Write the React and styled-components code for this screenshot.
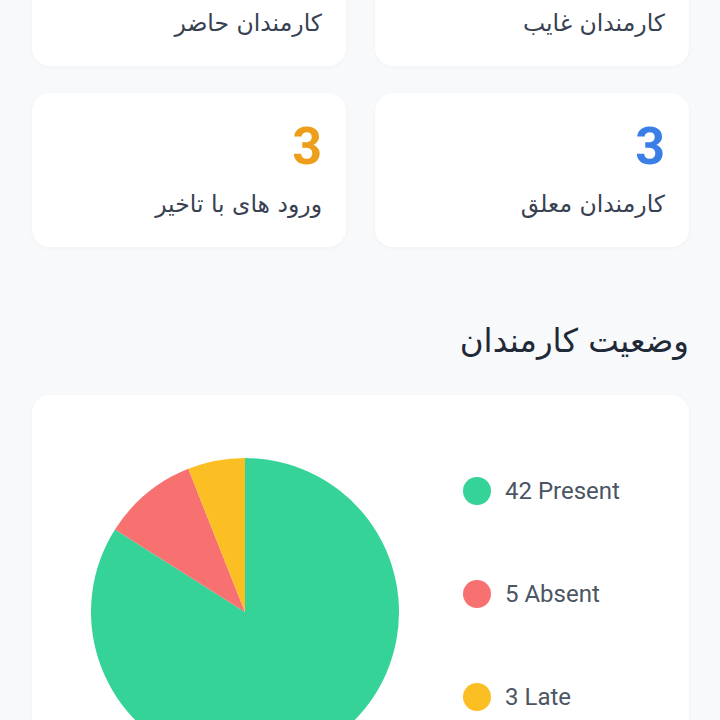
import React from "react";
import styled, { createGlobalStyle } from "styled-components";

const GlobalStyle = createGlobalStyle`
  html, body {
    margin: 0;
    padding: 0;
    background: #f8f9fb;
  }
  * {
    box-sizing: border-box;
  }
`;

const Page = styled.div`
  min-height: 100vh;
  background: #f8f9fb;
  padding: 0 31px 40px 32px;
  direction: rtl;
  overflow: hidden;
  font-family: "Roboto", "DejaVu Sans", sans-serif;
`;

const StatsGrid = styled.div`
  display: grid;
  grid-template-columns: 1fr 1fr;
  column-gap: 29px;
  row-gap: 27px;
  margin-top: -88px;
`;

const StatCard = styled.div`
  height: 154px;
  background: #ffffff;
  border-radius: 18px;
  padding: 0 24px;
  display: flex;
  flex-direction: column;
  justify-content: center;
  box-shadow: 0 1px 4px rgba(30, 41, 59, 0.04);
`;

const StatNumber = styled.div`
  font-family: "Roboto", sans-serif;
  font-weight: 700;
  font-size: 52px;
  line-height: 1;
  color: ${(props) => props.color};
`;

const StatLabel = styled.div`
  margin-top: 16px;
  font-family: "DejaVu Sans", sans-serif;
  font-size: 23.5px;
  line-height: 1.3;
  color: #374151;
`;

const SectionTitle = styled.h2`
  margin: 72px 0 0;
  font-family: "DejaVu Sans", sans-serif;
  font-weight: 400;
  font-size: 32.5px;
  line-height: 1.4;
  color: #1f2937;
`;

const ChartCard = styled.div`
  margin-top: 30px;
  background: #ffffff;
  border-radius: 18px;
  padding: 63px 40px 40px 59px;
  direction: ltr;
  display: flex;
  align-items: flex-start;
  gap: 64px;
  box-shadow: 0 1px 4px rgba(30, 41, 59, 0.04);
`;

const Legend = styled.ul`
  list-style: none;
  margin: 19px 0 0;
  padding: 0;
  display: flex;
  flex-direction: column;
  gap: 75px;
`;

const LegendItem = styled.li`
  display: flex;
  align-items: center;
  gap: 14px;
  height: 28px;
  font-family: "Roboto", sans-serif;
  font-size: 24px;
  color: #4b5563;
`;

const Dot = styled.span`
  width: 28px;
  height: 28px;
  border-radius: 50%;
  background: ${(props) => props.color};
  flex-shrink: 0;
`;

const stats = [
  { label: "کارمندان غایب", value: 5, color: "#ef4444" },
  { label: "کارمندان حاضر", value: 42, color: "#10b981" },
  { label: "کارمندان معلق", value: 3, color: "#3b7fe6" },
  { label: "ورود های با تاخیر", value: 3, color: "#ed9f1c" },
];

const slices = [
  { label: "Present", value: 42, color: "#36d399" },
  { label: "Absent", value: 5, color: "#f87171" },
  { label: "Late", value: 3, color: "#fbbf24" },
];

const PieChart = ({ data, size }) => {
  const r = size / 2;
  const total = data.reduce((s, d) => s + d.value, 0);
  let angle = 0;
  return (
    <svg width={size} height={size} viewBox={`0 0 ${size} ${size}`}>
      {data.map((d) => {
        const start = angle;
        const end = angle + (d.value / total) * Math.PI * 2;
        angle = end;
        const x1 = r + r * Math.sin(start);
        const y1 = r - r * Math.cos(start);
        const x2 = r + r * Math.sin(end);
        const y2 = r - r * Math.cos(end);
        const large = end - start > Math.PI ? 1 : 0;
        return (
          <path
            key={d.label}
            d={`M${r} ${r} L${x1} ${y1} A${r} ${r} 0 ${large} 1 ${x2} ${y2} Z`}
            fill={d.color}
          />
        );
      })}
    </svg>
  );
};

const App = () => {
  return (
    <>
      <GlobalStyle />
      <Page>
        <StatsGrid>
          {stats.map((s) => (
            <StatCard key={s.label}>
              <StatNumber color={s.color}>{s.value}</StatNumber>
              <StatLabel>{s.label}</StatLabel>
            </StatCard>
          ))}
        </StatsGrid>
        <SectionTitle>وضعیت کارمندان</SectionTitle>
        <ChartCard>
          <PieChart data={slices} size={308} />
          <Legend>
            {slices.map((s) => (
              <LegendItem key={s.label}>
                <Dot color={s.color} />
                {s.value} {s.label}
              </LegendItem>
            ))}
          </Legend>
        </ChartCard>
      </Page>
    </>
  );
};

export default App;
